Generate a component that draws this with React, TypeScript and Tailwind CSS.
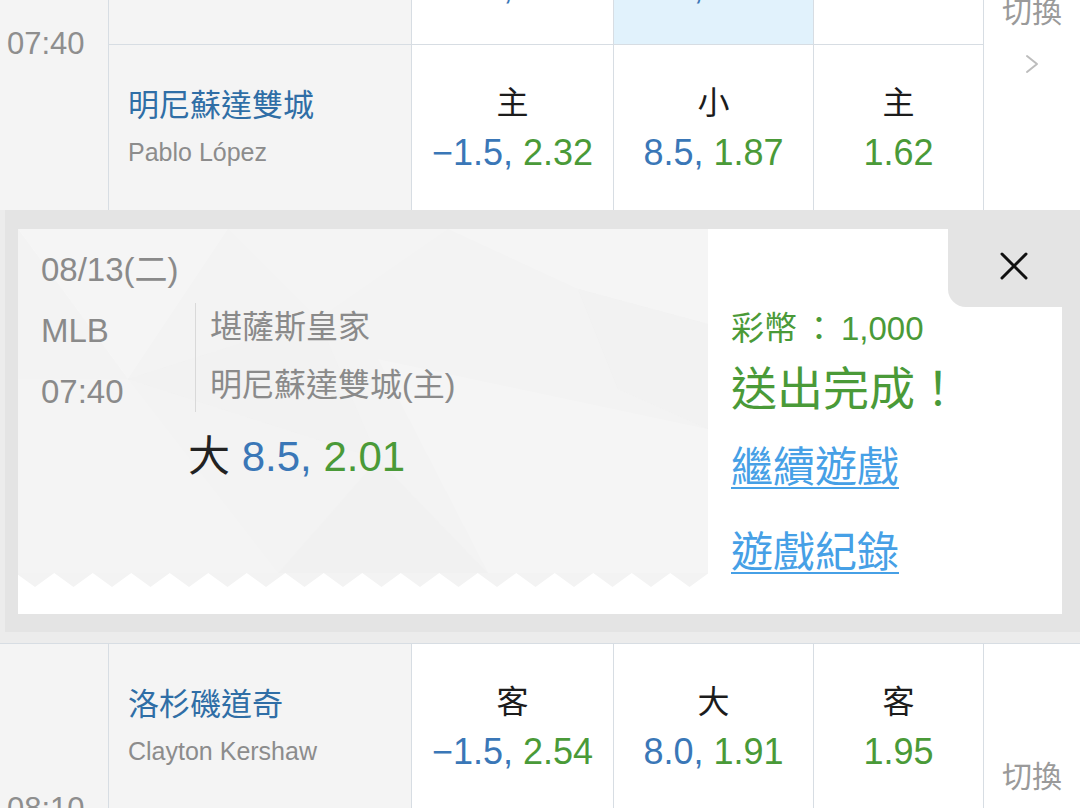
import React from "react";

const BLUE = "text-[#3a77b7]";
const GREEN = "text-[#4a9a38]";

function TeamCell({ name, pitcher }: { name: string; pitcher: string }) {
  return (
    <div className="w-[303px] h-full shrink-0 border-r border-[#d7dde3] bg-[#f4f4f4] pl-[19px] pt-[41px] flex flex-col">
      <div className="h-[40px] leading-[40px] text-[31px] text-[#2f6ea6]">{name}</div>
      <div className="mt-[8px] h-[36px] leading-[36px] text-[25px] text-[#8c8c8c]">{pitcher}</div>
    </div>
  );
}

function OddsCell({
  label,
  hcp,
  price,
  cls,
}: {
  label: string;
  hcp?: string;
  price: string;
  cls: string;
}) {
  return (
    <div className={cls}>
      <div className="h-[40px] leading-[40px] text-[32px] text-[#1c1c1c] text-center">{label}</div>
      <div className="mt-[8px] h-[44px] leading-[44px] text-[36px] text-center whitespace-nowrap">
        {hcp ? (
          <>
            <span className={BLUE}>{hcp}</span> <span className={GREEN}>{price}</span>
          </>
        ) : (
          <span className={GREEN}>{price}</span>
        )}
      </div>
    </div>
  );
}

type RowData = {
  name: string;
  pitcher: string;
  c2: [string, string, string];
  c3: [string, string, string];
  c4: [string, string];
  hl?: boolean;
};

function Row({ d, last }: { d: RowData; last?: boolean }) {
  return (
    <div className={last ? "flex h-[165px]" : "flex h-[166px] border-b border-[#d7dde3]"}>
      <TeamCell name={d.name} pitcher={d.pitcher} />
      <OddsCell
        label={d.c2[0]}
        hcp={d.c2[1]}
        price={d.c2[2]}
        cls="w-[202px] shrink-0 border-r border-[#d7dde3] bg-white pt-[38px]"
      />
      <OddsCell
        label={d.c3[0]}
        hcp={d.c3[1]}
        price={d.c3[2]}
        cls={
          d.hl
            ? "w-[200px] shrink-0 border-r border-[#d7dde3] bg-[#e1f2fc] pt-[38px]"
            : "w-[200px] shrink-0 border-r border-[#d7dde3] bg-white pt-[38px]"
        }
      />
      <OddsCell
        label={d.c4[0]}
        price={d.c4[1]}
        cls="w-[170px] shrink-0 border-r border-[#d7dde3] bg-white pt-[38px]"
      />
    </div>
  );
}

function Chevron() {
  return (
    <svg width="14" height="20" viewBox="0 0 14 20" fill="none">
      <polyline points="2,2 12,10 2,18" stroke="#bdbdbd" strokeWidth="2" strokeLinecap="round" strokeLinejoin="round" />
    </svg>
  );
}

function Group({ time, rows, top }: { time: string; rows: RowData[]; top?: boolean }) {
  return (
    <div className={top ? "flex h-[331px] mt-[-121px] shrink-0" : "flex h-[331px] border-t border-[#d7dde3] shrink-0"}>
      <div className="w-[109px] shrink-0 border-r border-[#d7dde3] bg-[#f4f4f4] flex items-center pl-[7px]">
        <span className="text-[31px] text-[#8e8e8e]">{time}</span>
      </div>
      <div className="flex flex-col w-[875px] shrink-0">
        <Row d={rows[0]} />
        <Row d={rows[1]} last />
      </div>
      <div className="w-[96px] shrink-0 bg-white flex flex-col items-center pt-[115px]">
        <div className="h-[36px] leading-[36px] text-[30px] text-[#9a9a9a]">切換</div>
        <div className="mt-[24px]">
          <Chevron />
        </div>
      </div>
    </div>
  );
}

function ZigZag() {
  const pts: string[] = ["0,0"];
  const period = 38.5;
  for (let k = 0; k < 19; k++) {
    const c = 17 + period * k;
    pts.push(`${c - period / 2},0`);
    pts.push(`${c},14`);
    pts.push(`${c + period / 2},0`);
  }
  pts.push("690,0");
  return (
    <svg width="690" height="14" viewBox="0 0 690 14" className="block">
      <polygon points={pts.join(" ")} fill="#f3f3f3" />
    </svg>
  );
}

function Facets() {
  return (
    <svg className="absolute inset-0" width="690" height="344" viewBox="0 0 690 344">
      <polygon points="0,0 210,0 110,150" fill="#ffffff" opacity="0.22" />
      <polygon points="210,0 430,0 300,90" fill="#ffffff" opacity="0.12" />
      <polygon points="430,0 690,0 690,95 560,60" fill="#ffffff" opacity="0.2" />
      <polygon points="0,150 110,150 260,344 0,344" fill="#ffffff" opacity="0.15" />
      <polygon points="360,130 690,200 690,344 470,344" fill="#ffffff" opacity="0.18" />
      <polygon points="110,150 300,90 360,230" fill="#efefef" opacity="0.25" />
      <polygon points="360,230 470,344 260,344" fill="#efefef" opacity="0.22" />
      <polygon points="560,60 690,95 690,200 600,160" fill="#f0f0f0" opacity="0.25" />
    </svg>
  );
}

function Ticket() {
  return (
    <div className="relative flex h-[385px] w-[1044px] bg-white">
      <div className="w-[690px] shrink-0 flex flex-col">
        <div className="relative h-[344px] bg-[#f3f3f3] overflow-hidden">
          <Facets />
          <div className="relative pl-[23px] pt-[21px] text-[33px] text-[#8a8a8a]">
            <div className="h-[40px] leading-[40px]">08/13(二)</div>
            <div className="flex mt-[10px]">
              <div className="w-[154px] shrink-0">
                <div className="h-[61px] leading-[61px]">MLB</div>
                <div className="h-[61px] leading-[61px]">07:40</div>
              </div>
              <div className="mt-[3px] h-[109px] border-l border-[#d9d9d9] pl-[14px] flex flex-col gap-[10px] text-[32px]">
                <div className="h-[48px] leading-[48px]">堪薩斯皇家</div>
                <div className="h-[48px] leading-[48px]">明尼蘇達雙城(主)</div>
              </div>
            </div>
            <div className="mt-[10px] ml-[147px] h-[50px] leading-[50px] text-[42px] whitespace-nowrap">
              <span className="text-[#222222]">大</span> <span className={BLUE}>8.5,</span>{" "}
              <span className={GREEN}>2.01</span>
            </div>
          </div>
        </div>
        <ZigZag />
      </div>
      <div className="flex-1 flex flex-col pl-[23px] pt-[77px]">
        <div className={"h-[40px] leading-[40px] text-[33px] whitespace-nowrap " + GREEN}>
          彩幣<span className="inline-block w-[44px] text-center font-['Noto_Sans_CJK_TC',sans-serif]">：</span>1,000
        </div>
        <div className={"mt-[15px] h-[56px] leading-[56px] text-[46px] " + GREEN}>送出完成！</div>
        <div className="mt-[25px] h-[52px] leading-[52px] text-[42px] text-[#46a0e6] underline decoration-2 underline-offset-[5px]">
          繼續遊戲
        </div>
        <div className="mt-[33px] h-[52px] leading-[52px] text-[42px] text-[#46a0e6] underline decoration-2 underline-offset-[5px]">
          遊戲紀錄
        </div>
      </div>
      <div className="absolute top-0 right-0 w-[114px] h-[78px] bg-[#e4e4e4] rounded-bl-[18px]">
        <svg className="absolute left-[52px] top-[23px]" width="28" height="28" viewBox="0 0 28 28">
          <line x1="2" y1="2" x2="26" y2="26" stroke="#111" strokeWidth="3" strokeLinecap="round" />
          <line x1="26" y1="2" x2="2" y2="26" stroke="#111" strokeWidth="3" strokeLinecap="round" />
        </svg>
      </div>
    </div>
  );
}

export default function App() {
  const top: RowData[] = [
    { name: "堪薩斯皇家", pitcher: "Cole Ragans", c2: ["客", "+1.5,", "1.58"], c3: ["大", "8.5,", "2.01"], c4: ["客", "2.30"], hl: true },
    { name: "明尼蘇達雙城", pitcher: "Pablo López", c2: ["主", "−1.5,", "2.32"], c3: ["小", "8.5,", "1.87"], c4: ["主", "1.62"] },
  ];
  const bottom: RowData[] = [
    { name: "洛杉磯道奇", pitcher: "Clayton Kershaw", c2: ["客", "−1.5,", "2.54"], c3: ["大", "8.0,", "1.91"], c4: ["客", "1.95"] },
    { name: "密爾瓦基釀酒人", pitcher: "Frankie Montas", c2: ["主", "+1.5,", "1.50"], c3: ["小", "8.0,", "1.93"], c4: ["主", "1.89"] },
  ];
  return (
    <div className="w-[1080px] h-[808px] overflow-hidden bg-white flex flex-col font-['Liberation_Sans','Noto_Sans_CJK_TC',sans-serif]">
      <Group time="07:40" rows={top} top />
      <div className="bg-[#ececec] pl-[5px] pb-[11px] shrink-0">
        <div className="bg-[#e4e4e4] pt-[19px] pl-[13px] pr-[18px] pb-[18px]">
          <Ticket />
        </div>
      </div>
      <Group time="08:10" rows={bottom} />
    </div>
  );
}
